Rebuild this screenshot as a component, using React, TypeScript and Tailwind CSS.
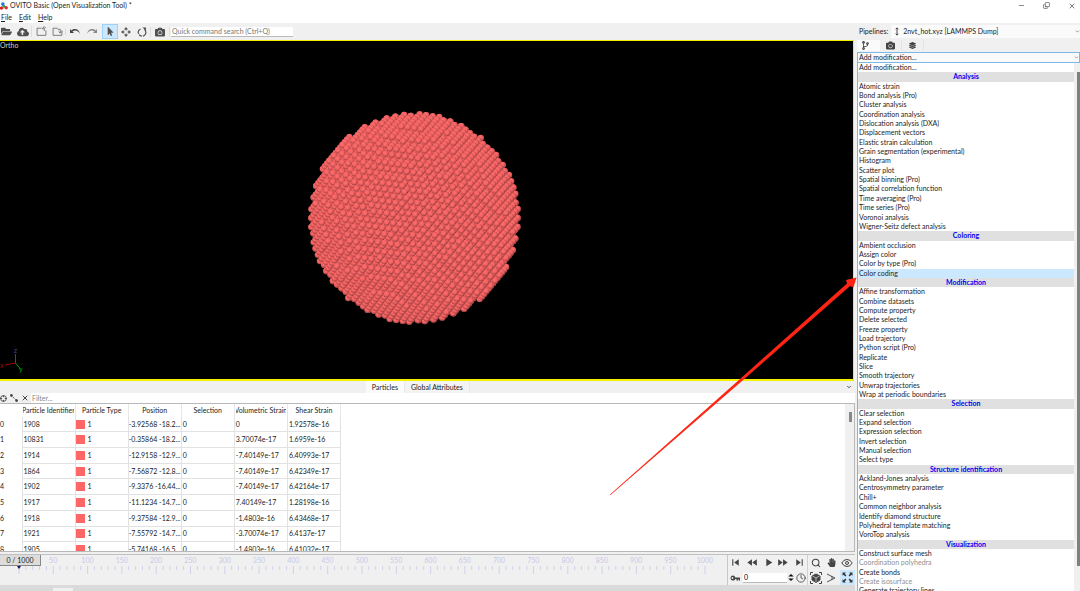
import React from 'react';
import {
  FaFolderOpen,
  FaCloudUploadAlt,
  FaMousePointer,
  FaCamera,
  FaCodeBranch,
  FaLayerGroup,
  FaHandPaper,
} from 'react-icons/fa';
import {
  MdSkipPrevious,
  MdSkipNext,
  MdFastRewind,
  MdFastForward,
  MdPlayArrow,
} from 'react-icons/md';
import { ChevronDown, Clock, Copy, Crosshair, Eye, Minus, Search, X } from 'lucide-react';

type Vec = [number, number, number];

const dot = (a: Vec, b: Vec) => a[0] * b[0] + a[1] * b[1] + a[2] * b[2];

// Camera basis: right, up and the direction towards the viewer
const RIGHT: Vec = [-0.902, 0.431, 0];
const UP: Vec = [-0.172, -0.361, 0.917];
const TOWARDS: Vec = [0.395, 0.827, 0.4];

const BALL_RADIUS = 104;
const ATOM_RADIUS = 3.2;
const HALF_CELL = 4.9;

// Outer shell of an fcc ball, sorted back to front
function buildAtoms() {
  const atoms: { x: number; y: number; z: number }[] = [];
  const n = Math.ceil(BALL_RADIUS / HALF_CELL);
  for (let i = -n; i <= n; i++) {
    for (let j = -n; j <= n; j++) {
      for (let k = -n; k <= n; k++) {
        if ((i + j + k) % 2 !== 0) continue;
        const p: Vec = [i * HALF_CELL, j * HALF_CELL, k * HALF_CELL];
        const r = Math.hypot(p[0], p[1], p[2]);
        if (r > BALL_RADIUS || r < BALL_RADIUS - 12) continue;
        const z = dot(p, TOWARDS);
        if (z < -16) continue;
        atoms.push({ x: dot(p, RIGHT), y: -dot(p, UP), z });
      }
    }
  }
  return atoms.sort((a, b) => a.z - b.z);
}

const ATOMS = buildAtoms();

const GROUPS = [
  {
    title: 'Analysis',
    items: [
      'Atomic strain', 'Bond analysis (Pro)', 'Cluster analysis', 'Coordination analysis',
      'Dislocation analysis (DXA)', 'Displacement vectors', 'Elastic strain calculation',
      'Grain segmentation (experimental)', 'Histogram', 'Scatter plot', 'Spatial binning (Pro)',
      'Spatial correlation function', 'Time averaging (Pro)', 'Time series (Pro)',
      'Voronoi analysis', 'Wigner-Seitz defect analysis',
    ],
  },
  { title: 'Coloring', items: ['Ambient occlusion', 'Assign color', 'Color by type (Pro)', 'Color coding'] },
  {
    title: 'Modification',
    items: [
      'Affine transformation', 'Combine datasets', 'Compute property', 'Delete selected',
      'Freeze property', 'Load trajectory', 'Python script (Pro)', 'Replicate', 'Slice',
      'Smooth trajectory', 'Unwrap trajectories', 'Wrap at periodic boundaries',
    ],
  },
  {
    title: 'Selection',
    items: ['Clear selection', 'Expand selection', 'Expression selection', 'Invert selection', 'Manual selection', 'Select type'],
  },
  {
    title: 'Structure identification',
    items: [
      'Ackland-Jones analysis', 'Centrosymmetry parameter', 'Chill+', 'Common neighbor analysis',
      'Identify diamond structure', 'Polyhedral template matching', 'VoroTop analysis',
    ],
  },
  {
    title: 'Visualization',
    items: ['Construct surface mesh', 'Coordination polyhedra', 'Create bonds', 'Create isosurface', 'Generate trajectory lines'],
  },
];

const DISABLED = ['Coordination polyhedra', 'Create isosurface'];

const COLUMNS = ['Particle Identifier', 'Particle Type', 'Position', 'Selection', 'Volumetric Strain', 'Shear Strain'];

const ROWS = [
  ['1908', '-3.92568 -18.2...', '0', '1.92578e-16'],
  ['10831', '-0.35864 -18.2...', '3.70074e-17', '1.6959e-16'],
  ['1914', '-12.9158 -12.9...', '-7.40149e-17', '6.40993e-17'],
  ['1864', '-7.56872 -12.8...', '-7.40149e-17', '6.42349e-17'],
  ['1902', '-9.3376 -16.44...', '-7.40149e-17', '6.42164e-17'],
  ['1917', '-11.1234 -14.7...', '7.40149e-17', '1.28198e-16'],
  ['1918', '-9.37584 -12.9...', '-1.4803e-16', '6.43468e-17'],
  ['1921', '-7.55792 -14.7...', '-3.70074e-17', '6.4137e-17'],
  ['1905', '-5.74168 -16.5...', '-1.4803e-16', '6.41032e-17'],
];

const TitleBar = () => (
  <header className="flex h-[11px] shrink-0 items-center bg-white">
    <svg viewBox="0 0 10 10" className="mr-[2px] size-[8px]">
      <path d="M3.5 2.5 L2 8 M3.5 2.5 L7.5 6.5 M2 8 L7.5 6.5" stroke="#777" strokeWidth="1" />
      <circle cx="3.6" cy="2.4" r="2.2" fill="#1976e8" />
      <circle cx="1.8" cy="7.6" r="2.1" fill="#e02020" />
      <circle cx="4.8" cy="5.4" r="1.5" fill="#20b040" />
      <circle cx="7.8" cy="7.2" r="2.1" fill="#e03030" />
    </svg>
    <h1 className="flex-1">OVITO Basic (Open Visualization Tool) *</h1>
    <div className="flex items-center gap-[18px] pr-[4px] text-[#333]">
      <button aria-label="Minimize"><Minus size={7} /></button>
      <button aria-label="Restore"><Copy size={7} className="-scale-x-100 rotate-180" /></button>
      <button aria-label="Close"><X size={8} /></button>
    </div>
  </header>
);

const MenuBar = () => (
  <nav className="flex h-[12px] shrink-0 items-center gap-[7px] bg-white pl-px">
    {['File', 'Edit', 'Help'].map((label) => (
      <button key={label}>
        <span className="underline">{label[0]}</span>{label.slice(1)}
      </button>
    ))}
  </nav>
);

const ExportIcon = ({ down = false }: { down?: boolean }) => (
  <svg viewBox="0 0 20 20" className="size-[11px]" fill="none" stroke="#666" strokeWidth="1.5">
    <path d="M10 4H2v13h16V8" />
    {down ? <path d="M10 6h5v6M12 10l3 3 3-3" /> : <path d="M12 6V4h3v5M12 4l3-3 3 3" />}
  </svg>
);

const Toolbar = () => (
  <div className="flex h-[17px] shrink-0 items-center bg-[#f0f0f0] text-[#505050]">
    <button aria-label="Open file" className="w-[14px] pl-px"><FaFolderOpen size={11} /></button>
    <button aria-label="Load remote file" className="flex w-[17px] justify-center"><FaCloudUploadAlt size={12} /></button>
    <button aria-label="Import" className="flex w-[19px] justify-center border-l border-[#ddd]"><ExportIcon /></button>
    <button aria-label="Export" className="flex w-[15px] justify-center"><ExportIcon down /></button>
    <button aria-label="Undo" className="flex w-[19px] justify-center border-l border-[#ddd]">
      <svg viewBox="0 0 22 14" className="w-[11px]" fill="#444"><path d="M0 2v8h8L5 7c5-4 12-2 15 5C19 3 9-1 3 5z" /></svg>
    </button>
    <button aria-label="Redo" className="flex w-[18px] justify-center pr-[4px]">
      <svg viewBox="0 0 22 14" className="w-[11px]" fill="#888"><path d="M22 2v8h-8l3-3C12 3 5 5 2 12 3 3 13-1 19 5z" /></svg>
    </button>
    <button aria-label="Select" className="flex h-[15px] w-[16px] items-center justify-center border border-[#9fd0f5] bg-[#cce8ff]"><FaMousePointer size={9} /></button>
    <button aria-label="Move" className="flex w-[16px] justify-center">
      <svg viewBox="0 0 20 20" className="size-[10px]" fill="#505050"><path d="M10 0l4 5h-3v2H9V5H6zM10 20l4-5h-3v-2H9v2H6zM0 10l5-4v3h2v2H5v3zM20 10l-5-4v3h-2v2h2v3z" /></svg>
    </button>
    <button aria-label="Rotate" className="flex w-[15px] justify-center">
      <svg viewBox="0 0 20 20" className="size-[10px]" fill="none" stroke="#505050" strokeWidth="2.4">
        <path d="M7 4a7.500 7.500 0 1 0 8 1" strokeDasharray="11 2 6 2 30" />
        <path d="M11 1h7v7z" fill="#505050" stroke="none" />
      </svg>
    </button>
    <button aria-label="Render" className="mx-px flex w-[20px] justify-center border-x border-[#ddd]"><FaCamera size={10} /></button>
    <input
      aria-label="Quick command search"
      placeholder="Quick command search (Ctrl+Q)"
      className="h-[10px] w-[122px] border-b border-[#bbb] bg-white pl-[1px] placeholder:text-[#777]"
    />
  </div>
);

const Viewport = () => (
  <main className="relative mr-px min-h-0 flex-1 overflow-hidden border border-b-2 border-l-0 border-[#f5f000] bg-black">
    <svg viewBox="0 0 853 338" preserveAspectRatio="xMinYMid meet" className="absolute inset-0 h-full w-full">
      <defs>
        <radialGradient id="atom" cx="45%" cy="40%" r="58%">
          <stop offset="0%" stopColor="#ff7070" />
          <stop offset="60%" stopColor="#f06060" />
          <stop offset="100%" stopColor="#a64343" />
        </radialGradient>
      </defs>
      <g transform="translate(414.5 177)">
        {ATOMS.map((a, i) => (
          <circle key={i} cx={a.x.toFixed(2)} cy={a.y.toFixed(2)} r={ATOM_RADIUS} fill="url(#atom)" />
        ))}
      </g>
      <g fontSize="7" strokeWidth="1">
        <path d="M15.500 322V313" stroke="#4040a0" />
        <path d="M15.500 322L5 324" stroke="#a00000" />
        <path d="M15.500 322l5 6" stroke="#00a000" />
        <text x="14" y="312" fill="#4848b0">z</text>
        <text x="0" y="327" fill="#b00000">x</text>
        <text x="19" y="331" fill="#00b000">y</text>
      </g>
    </svg>
    <span className="relative block text-[#ccc]">Ortho</span>
  </main>
);

const DataInspector = () => (
  <section className="shrink-0 bg-[#f0f0f0]">
    <div role="tablist" className="flex h-[12px] items-stretch">
      <div className="flex w-[47%] justify-end">
        <button role="tab" aria-selected="true" className="-mr-[2px] w-[38px] bg-[#fafafa]">Particles</button>
      </div>
      <div className="flex flex-1 items-center justify-between pl-[2px]">
        <button role="tab" aria-selected="false" className="h-full w-[66px] border-x border-[#e8e8e8] bg-[#f3f3f3]">Global Attributes</button>
        <button aria-label="Collapse" className="pr-[3px]"><ChevronDown size={6} strokeWidth={3} /></button>
      </div>
    </div>
    <div className="flex h-[10px] items-center gap-[3px] text-[#444]">
      <button aria-label="Pick particle"><Crosshair size={7} strokeWidth={3} /></button>
      <button aria-label="Measure distance">
        <svg viewBox="0 0 8 8" className="size-[8px]" fill="#444" stroke="#444"><path d="M1 1l6 6" strokeDasharray="1.5 1" /><circle cx="1.4" cy="1.4" r="1" /><circle cx="6.6" cy="6.6" r="1" /></svg>
      </button>
      <button aria-label="Clear filter"><X size={8} strokeWidth={3} /></button>
      <input aria-label="Filter" placeholder="Filter..." className="-ml-px h-full min-w-0 flex-1 bg-white pl-[1px] placeholder:text-[#888]" />
    </div>
    <div className="flex h-[149px] overflow-hidden border-y border-r border-[#b8b8b8] bg-white">
      <div className="min-w-0 flex-1">
        <table className="h-[154px] w-[341px] table-fixed border-collapse">
          <thead>
            <tr className="h-[13px]">
              <th className="w-[22px] p-0" />
              {COLUMNS.map((name) => (
                <th key={name} className="border-r border-[#e8e8e8] px-px py-0 font-normal">
                  <div className="flex justify-center overflow-hidden whitespace-nowrap">{name}</div>
                </th>
              ))}
            </tr>
          </thead>
          <tbody>
            {ROWS.map(([id, position, volumetric, shear], i) => (
              <tr key={id}>
                <th scope="row" className="border-r border-[#e2e2e2] p-0 text-left font-normal">{i}</th>
                <td className="border border-t-0 border-[#e2e2e2] p-0 pl-[1px]">{id}</td>
                <td className="border border-t-0 border-[#e2e2e2] p-0">
                  <div className="flex items-center gap-[3px]"><span className="size-[9px] bg-[#ff6666]" />1</div>
                </td>
                <td className="overflow-hidden border border-t-0 border-[#e2e2e2] p-0 whitespace-nowrap">{position}</td>
                <td className="border border-t-0 border-[#e2e2e2] p-0 pl-[1px]">0</td>
                <td className="border border-t-0 border-[#e2e2e2] p-0 pl-[1px]">{volumetric}</td>
                <td className="border border-t-0 border-[#e2e2e2] p-0 pl-[1px]">{shear}</td>
              </tr>
            ))}
          </tbody>
        </table>
      </div>
      <div className="w-[9px] bg-[#f0f0f0] pt-[8px] pl-[4px]">
        <div className="h-[10px] w-[3px] bg-[#888]" />
      </div>
    </div>
  </section>
);

const Timeline = () => (
  <div className="min-w-0 flex-1 border-r border-[#c8c8c8]">
    <div className="flex h-[11px] items-center">
      <button className="z-10 -mr-[5px] h-[11px] w-[41px] shrink-0 border-r border-b border-[#888] bg-[#dcdcdc]">0 / 1000</button>
      <div className="flex flex-1 pr-[5px] text-center text-[#c8c8e6]">
        {Array.from({ length: 20 }, (_, i) => (
          <span key={i} className="w-0 flex-1">{(i + 1) * 50}</span>
        ))}
      </div>
    </div>
    <div className="pr-[22px] pl-[19px]">
      <svg className="h-[9px] w-full overflow-visible">
        {Array.from({ length: 101 }, (_, i) => (
          <line key={i} x1={`${i}%`} x2={`${i}%`} y1="0" y2={i % 5 === 0 ? 8 : 4} stroke="#d0d0e8" />
        ))}
        <path d="M-2 0h4l-2 3z" fill="#101060" />
      </svg>
    </div>
  </div>
);

const PlaybackControls = () => (
  <div className="flex w-[80px] shrink-0 flex-col justify-around border-r border-[#d0d0d0] text-[#444]">
    <div className="grid h-[14px] grid-cols-[14px_20px_12px_17px_17px] items-center justify-items-center">
      <button aria-label="First frame"><MdSkipPrevious size={13} /></button>
      <button aria-label="Previous frame"><MdFastRewind size={13} /></button>
      <button aria-label="Play"><MdPlayArrow size={13} /></button>
      <button aria-label="Next frame"><MdFastForward size={13} /></button>
      <button aria-label="Last frame"><MdSkipNext size={13} /></button>
    </div>
    <div className="flex h-[14px] items-center pl-[2px]">
      <button aria-label="Auto key">
        <svg viewBox="0 0 20 12" className="w-[10px]" fill="#444" fillRule="evenodd">
          <path d="M6 1a5 5 0 1 0 4.600 7H13v3h3V8h1v3h3V5h-9.500A5 5 0 0 0 6 1zM5 4.200a1.800 1.800 0 1 1 0 3.600a1.800 1.800 0 0 1 0-3.600z" />
        </svg>
      </button>
      <input aria-label="Frame" defaultValue="0" className="ml-[3px] h-[10px] w-[44px] border-b border-[#bbb] bg-white pl-[1px] text-black" />
      <svg viewBox="0 0 6 10" className="ml-[1px] h-[9px] w-[6px]" fill="#111"><path d="M0 4l3-3 3 3zM0 6l3 3 3-3z" /></svg>
      <button aria-label="Animation settings" className="ml-[2px]"><Clock size={10} strokeWidth={2} /></button>
    </div>
  </div>
);

const ViewControls = () => (
  <div className="grid w-[47px] shrink-0 grid-cols-3 grid-rows-2 place-items-center text-[#444]">
    <button aria-label="Zoom"><Search size={10} strokeWidth={2.5} /></button>
    <button aria-label="Pan"><FaHandPaper size={9} /></button>
    <button aria-label="Orbit"><Eye size={12} /></button>
    <button aria-label="Zoom scene extents">
      <svg viewBox="0 0 24 24" className="size-[12px]" fill="none" stroke="#444" strokeWidth="2">
        <path d="M1 6V1h5M18 1h5v5M23 18v5h-5M6 23H1v-5" />
        <path d="M12 4l8 4v8l-8 5-8-5V8z" fill="#444" />
        <path d="M5 8l7 4 7-4M12 12v8" stroke="#f0f0f0" strokeWidth="1.3" />
      </svg>
    </button>
    <button aria-label="Field of view">
      <svg viewBox="0 0 20 20" className="size-[10px]" fill="none" stroke="#444" strokeWidth="1.8"><path d="M2 2l16 8L2 18M11 6q3 4 0 8" /></svg>
    </button>
    <button aria-label="Maximize viewport" className="flex size-[15px] items-center justify-center bg-[#cce8ff]">
      <svg viewBox="0 0 20 20" className="size-[11px]" fill="#333">
        <path d="M1 1h6L5 3l3 3-2 2-3-3-2 2zM19 1h-6l2 2-3 3 2 2 3-3 2 2zM1 19h6l-2-2 3-3-2-2-3 3-2-2zM19 19h-6l2-2-3-3 2-2 3 3 2-2z" />
      </svg>
    </button>
  </div>
);

const SidePanel = () => (
  <aside className="flex w-[225px] shrink-0 flex-col bg-[#f0f0f0]">
    <div className="flex h-[17px] shrink-0 items-center pl-[4px]">
      <label htmlFor="pipeline">Pipelines:</label>
      <div className="ml-[3px] flex h-[13px] min-w-0 flex-1 items-center bg-[#fafafa]">
        <svg viewBox="0 0 6 10" className="ml-[3px] h-[9px] w-[6px]" fill="none" stroke="#333"><path d="M3 1v8M1.500 2.500L3 1l1.500 1.500M1.500 7.500L3 9l1.500-1.500" /></svg>
        <select id="pipeline" className="min-w-0 flex-1 appearance-none pl-[3px]">
          <option>2nvt_hot.xyz [LAMMPS Dump]</option>
        </select>
        <ChevronDown size={5} />
      </div>
    </div>
    <div role="tablist" className="flex h-[12px] shrink-0 pb-px pl-[2px] text-[#444]">
      <button role="tab" aria-label="Pipeline" aria-selected="true" className="flex w-[23px] items-center justify-center bg-[#fafafa] pr-[6px]"><FaCodeBranch size={9} /></button>
      <button role="tab" aria-label="Rendering" aria-selected="false" className="flex w-[22px] items-center justify-center border-r border-[#e4e4e4] pr-px"><FaCamera size={9} /></button>
      <button role="tab" aria-label="Overlays" aria-selected="false" className="flex w-[22px] items-center justify-center border-r border-[#e4e4e4]"><FaLayerGroup size={7} /></button>
    </div>
    <div className="ml-[2px] flex h-[11px] shrink-0 items-center border border-[#7ab8e8] bg-[#fafafa]">
      <select aria-label="Add modification" className="min-w-0 flex-1 appearance-none pl-[1px]">
        <option>Add modification...</option>
      </select>
      <ChevronDown size={5} />
    </div>
    <div className="ml-[2px] flex min-h-0 flex-1 overflow-hidden border-l border-[#aaa] bg-white">
      <ul className="-mb-[5px] flex flex-1 flex-col leading-[9px]">
        <li className="flex-1 pl-[1px]"><button className="block">Add modification...</button></li>
        {GROUPS.map((group) => (
          <React.Fragment key={group.title}>
            <li className="flex-1 bg-[#e0e0e0] text-center font-bold text-[#0000f0]">{group.title}</li>
            {group.items.map((item) => (
              <li key={item} className={`flex-1 pl-[1px] ${item === 'Color coding' ? 'bg-[#cce8ff]' : ''}`}>
                <button disabled={DISABLED.includes(item)} className="block disabled:text-[#909090]">{item}</button>
              </li>
            ))}
          </React.Fragment>
        ))}
      </ul>
      <div className="flex w-[6px] flex-col bg-[#f0f0f0] pt-[9px] pb-[25px] pl-[3px]">
        <div className="flex-1 bg-[#808080]" />
      </div>
    </div>
  </aside>
);

export default function App() {
  return (
    <div className="relative flex h-screen flex-col overflow-hidden bg-[#f0f0f0] font-['Lato','Noto_Sans',sans-serif] text-[7px] leading-[9px] text-[#1c1c1c]">
      <TitleBar />
      <MenuBar />
      <div className="flex min-h-0 flex-1">
        <div className="flex min-w-0 flex-1 flex-col">
          <Toolbar />
          <Viewport />
          <DataInspector />
          <footer className="mt-[2px] shrink-0">
            <div className="flex h-[31px] border-t border-[#c0c0c0]">
              <Timeline />
              <PlaybackControls />
              <ViewControls />
            </div>
            <div className="h-[6px] bg-[#dadada] pt-[3px] pl-[53px]">
              <div className="h-[3px] w-[20px] bg-[#f0f0f0]" />
            </div>
          </footer>
        </div>
        <SidePanel />
      </div>
      <svg viewBox="0 0 1080 591" preserveAspectRatio="none" className="pointer-events-none absolute inset-0 h-full w-full">
        <path d="M610 494.500L740 379L847 283.500L846 280L856.500 277.500L853.500 287.500L850 286L742 381L610.500 495z" fill="#ff2414" />
      </svg>
    </div>
  );
}
